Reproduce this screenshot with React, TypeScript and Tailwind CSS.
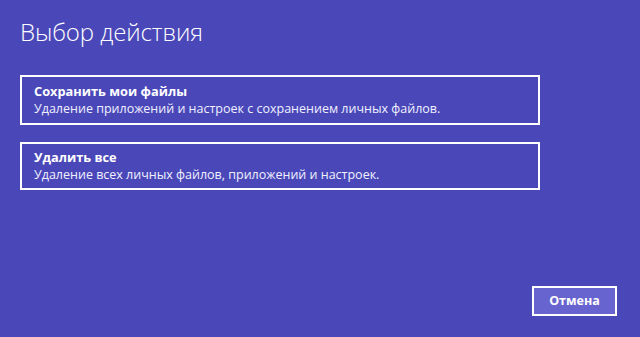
import React from "react";

type OptionProps = {
  title: string;
  description: string;
  className?: string;
};

function Option(props: OptionProps) {
  return (
    <button
      type="button"
      className={
        "block w-[520px] border-2 border-white text-left text-white px-[12px] " +
        (props.className ?? "")
      }
    >
      <div className="text-[12.8px] font-bold leading-[17px]">{props.title}</div>
      <div className="text-[12.5px] leading-[17px] text-[#f0f0ff]">
        {props.description}
      </div>
    </button>
  );
}

export default function App() {
  return (
    <div
      className="w-[640px] h-[337px] bg-[#4a48b8] text-white flex flex-col px-[20px] overflow-hidden"
      style={{ fontFamily: '"Open Sans", "Noto Sans", sans-serif' }}
    >
      <h1 className="mt-[16px] text-[24px] font-light leading-[32px] tracking-[-0.1px]">
        Выбор действия
      </h1>
      <div className="mt-[27px] flex flex-col gap-[17px]">
        <Option
          className="h-[50px] pt-[5px] pb-[6px]"
          title="Сохранить мои файлы"
          description="Удаление приложений и настроек с сохранением личных файлов."
        />
        <Option
          className="h-[48px] pt-[4px] pb-[5px]"
          title="Удалить все"
          description="Удаление всех личных файлов, приложений и настроек."
        />
      </div>
      <div className="flex-1 flex items-end justify-end pb-[21px] pr-[3px]">
        <button
          type="button"
          className="w-[85px] h-[30px] border-2 border-white bg-[#6764cf] text-white text-[12.5px] font-bold"
        >
          Отмена
        </button>
      </div>
    </div>
  );
}
